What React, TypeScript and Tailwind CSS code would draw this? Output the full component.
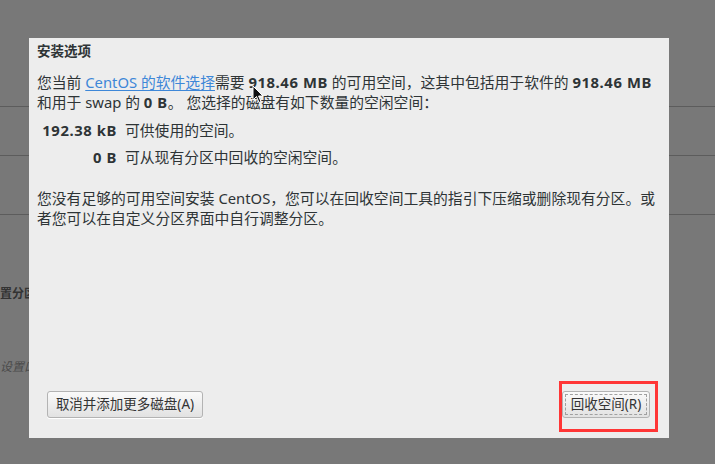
import React from "react";

const font = "font-['Noto_Sans','Noto_Sans_CJK_SC',sans-serif]";

function Cursor() {
  return (
    <svg className="absolute left-[252px] top-[85px]" width="12" height="19" viewBox="0 0 12 19">
      <path d="M1 1 L1 15 L4.5 11.5 L7 17.5 L9 16.6 L6.6 11 L11 11 Z" fill="#111" stroke="#fff" strokeWidth="1" strokeLinejoin="round" />
    </svg>
  );
}

export default function App() {
  return (
    <div className={`relative w-[715px] h-[464px] overflow-hidden bg-[#787878] text-[#2e3436] ${font}`}>
      {/* page behind the dialog */}
      <div className="flex flex-col">
        <div className="h-[106px]" />
        <div className="h-[49px] border-t border-[#5c5c5c]" />
        <div className="h-[59px] border-t border-[#5c5c5c]" />
        <div className="h-[70px] border-t border-[#5c5c5c]" />
        <div className="h-[20px] text-[12px] leading-[20px] font-bold text-[#333] whitespace-nowrap">置分区</div>
        <div className="h-[53px]" />
        <div className="h-[20px] text-[12px] leading-[20px] italic text-[#4a4a4a] whitespace-nowrap">设置口</div>
      </div>

      {/* dialog */}
      <div className="absolute left-[29px] top-[38px] w-[640px] h-[400px] bg-[#ededed] flex flex-col">
        <div className="px-2 pt-1 text-[13.5px] leading-[18px] font-bold">安装选项</div>

        <div className="px-2 mt-[12px] text-[14.8px] leading-[20px] whitespace-nowrap">
          <div>
            您当前 <span className="text-[#3d87d8] underline underline-offset-2">CentOS 的软件选择</span>需要 <b className="tracking-[0.6px]">918.46 MB</b> 的可用空间，这其中包括用于软件的 <b className="tracking-[0.6px]">918.46 MB</b>
          </div>
          <div>
            和用于 swap 的 <b className="tracking-[0.6px]">0 B</b>。 您选择的磁盘有如下数量的空闲空间：
          </div>
        </div>

        <div className="mt-[8px] flex flex-col gap-[7px] text-[14.8px] leading-[20px] whitespace-nowrap">
          <div className="flex">
            <span className="w-[88px] text-right font-bold tracking-[0.6px]">192.38 kB</span>
            <span className="ml-2">可供使用的空间。</span>
          </div>
          <div className="flex">
            <span className="w-[88px] text-right font-bold tracking-[0.6px]">0 B</span>
            <span className="ml-2">可从现有分区中回收的空闲空间。</span>
          </div>
        </div>

        <div className="px-2 mt-[21px] text-[14.8px] leading-[20px] whitespace-nowrap">
          <div>您没有足够的可用空间安装 CentOS，您可以在回收空间工具的指引下压缩或删除现有分区。或</div>
          <div>者您可以在自定义分区界面中自行调整分区。</div>
        </div>

        <div className="mt-auto mb-[20px] pl-[18px] pr-[19px] flex justify-between">
          <button className="h-[27px] w-[156px] rounded-[3px] border border-[#b3b3b3] bg-gradient-to-b from-[#fafafa] to-[#e2e2e2] text-[13.5px] text-[#333] shadow-[0_1px_0_#fff]">
            取消并添加更多磁盘(A)
          </button>
          <div className="relative">
            <button className="h-[27px] w-[88px] rounded-[3px] border border-[#b3b3b3] bg-gradient-to-b from-[#fafafa] to-[#e2e2e2] p-[2px] text-[13.5px] text-[#333]">
              <span className="flex h-full w-full items-center justify-center border border-dashed border-[#a0a0a0]">回收空间(R)</span>
            </button>
            <div className="absolute -left-[3px] -right-[8px] -top-[10px] -bottom-[14px] border-[3px] border-[#ff3636]" />
          </div>
        </div>
      </div>

      <Cursor />
    </div>
  );
}
